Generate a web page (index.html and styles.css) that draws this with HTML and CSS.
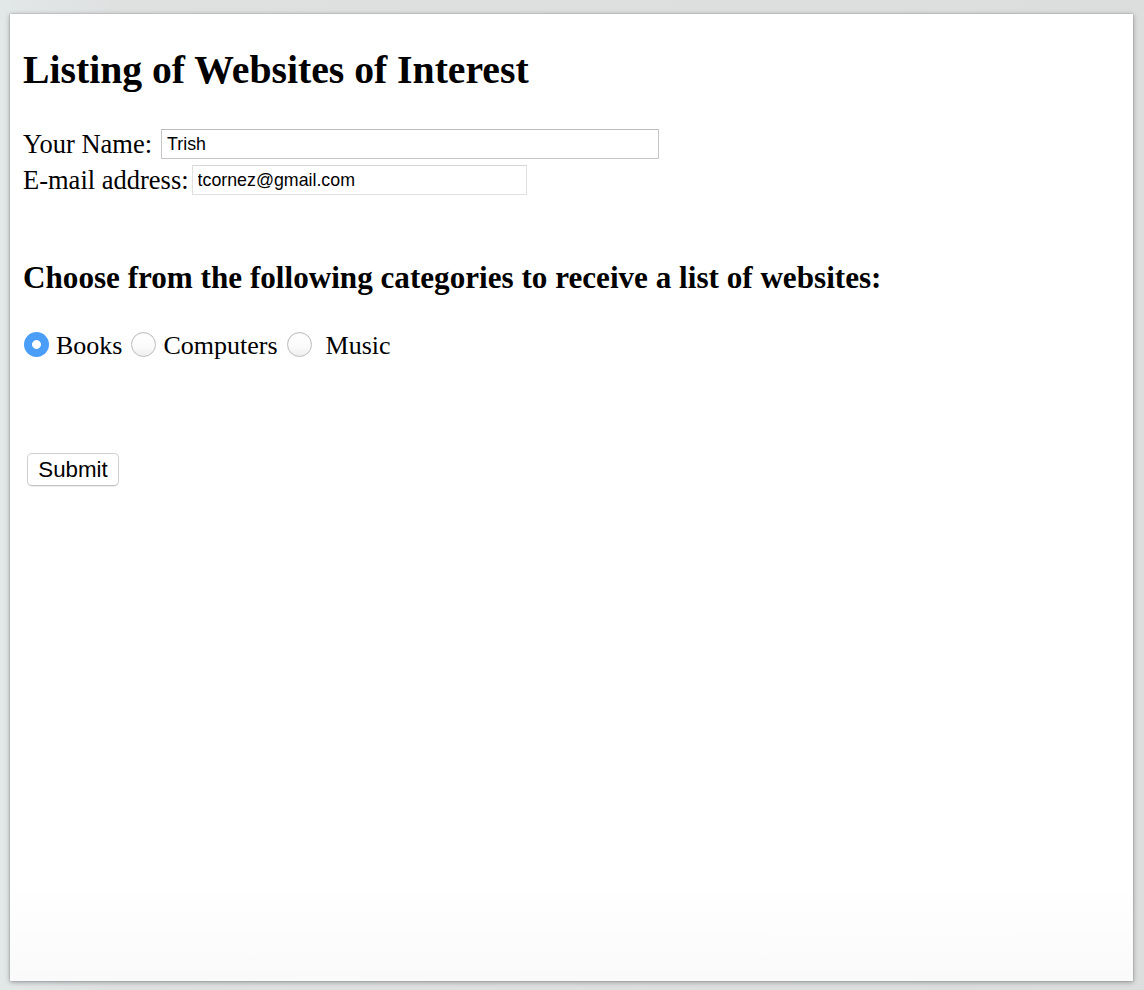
FILE: index.html
```html
<!DOCTYPE html>
<html lang="en">
<head>
<meta charset="utf-8">
<title>Listing of Websites of Interest</title>
<link rel="stylesheet" href="styles.css">
</head>
<body>
<div class="desktop">
  <main class="page">
    <h1 class="title">Listing of Websites of Interest</h1>
    <form class="form">
      <div class="field">
        <label class="label" for="name">Your Name:</label>
        <input class="text-input name-input" id="name" type="text" value="Trish">
      </div>
      <div class="field">
        <label class="label" for="email">E-mail address:</label>
        <input class="text-input email-input" id="email" type="text" value="tcornez@gmail.com">
      </div>
      <h2 class="subtitle">Choose from the following categories to receive a list of websites:</h2>
      <div class="choices">
        <input class="radio radio-first" type="radio" name="cat" id="books" checked>
        <label class="choice-label" for="books">Books</label>
        <input class="radio" type="radio" name="cat" id="computers">
        <label class="choice-label" for="computers">Computers</label>
        <input class="radio" type="radio" name="cat" id="music">
        <label class="choice-label choice-spaced" for="music">Music</label>
      </div>
      <div class="actions">
        <button class="submit" type="button">Submit</button>
      </div>
    </form>
  </main>
</div>
</body>
</html>
```

FILE: styles.css
```css
html, body {
  margin: 0;
  padding: 0;
}

body {
  width: 1144px;
  height: 990px;
  overflow: hidden;
  background: linear-gradient(180deg, #d9dbdb 0%, #e2e4e4 40%, #e9e9e9 100%);
}

.desktop {
  box-sizing: border-box;
  width: 1144px;
  height: 990px;
  padding: 14px 11px 9px 10px;
  background: linear-gradient(90deg, #e2e7e8 0%, #dfe1e1 10%, #dcdddd 100%);
}

.page {
  box-sizing: border-box;
  height: 967px;
  background: linear-gradient(180deg, #ffffff 0%, #ffffff 90%, #fafafa 100%);
  box-shadow: 0 1px 5px rgba(0, 0, 0, 0.35), 0 0 1px rgba(0, 0, 0, 0.3);
  padding: 34px 13px 0 13px;
  font-family: "Liberation Serif", "Times New Roman", serif;
  color: #000;
}

.title {
  margin: 0;
  font-size: 39.7px;
  line-height: 44px;
  font-weight: bold;
}

.form {
  margin: 34px 0 0 0;
}

.field {
  display: flex;
  align-items: center;
  height: 36px;
}

.label {
  font-size: 26.5px;
  line-height: 36px;
}

.text-input {
  box-sizing: border-box;
  height: 30px;
  margin: 0;
  padding: 0 5px;
  font-family: "Liberation Sans", Arial, sans-serif;
  font-size: 17.8px;
  color: #000;
  background: #fff;
  outline: none;
  border-radius: 0;
}

.name-input {
  width: 498px;
  margin-left: 9px;
  border: 1px solid #c6c6c6;
  border-top-color: #bdbdbd;
}

.email-input {
  width: 335px;
  margin-left: 3px;
  border: 1px solid #e0e0e0;
  border-top-color: #d6d6d6;
}

.subtitle {
  margin: 62px 0 0 0;
  font-size: 31.15px;
  line-height: 36px;
  font-weight: bold;
}

.choices {
  display: flex;
  align-items: center;
  height: 36px;
  margin-top: 32px;
  font-size: 26px;
  line-height: 36px;
}

.radio {
  -webkit-appearance: none;
  appearance: none;
  box-sizing: border-box;
  width: 25px;
  height: 25px;
  margin: 0 7px 0 9px;
  position: relative;
  top: -2px;
  border-radius: 50%;
  border: 1px solid #bdbdbd;
  background: linear-gradient(180deg, #ffffff 0%, #fbfbfb 60%, #eeeeee 100%);
  box-shadow: inset 0 1px 1px rgba(0, 0, 0, 0.05);
}

.radio-first {
  margin-left: 1px;
}

.radio:checked {
  border: none;
  background: radial-gradient(circle at 50% 50%, #ffffff 0, #ffffff 4px, #4a9ef8 4.8px, #4a9ef8 100%);
  box-shadow: none;
}

.choice-label {
  white-space: pre;
}

.choice-spaced {
  margin-left: 7px;
}

.actions {
  margin-top: 89px;
}

.submit {
  box-sizing: border-box;
  width: 92px;
  height: 33px;
  margin: 0 0 0 4px;
  padding: 0;
  font-family: "Liberation Sans", Arial, sans-serif;
  font-size: 22.3px;
  color: #000;
  background: #fff;
  border: 1px solid #d0d0d0;
  border-bottom-color: #c2c2c2;
  border-radius: 5px;
  box-shadow: 0 1px 1px rgba(0, 0, 0, 0.08);
}
```
